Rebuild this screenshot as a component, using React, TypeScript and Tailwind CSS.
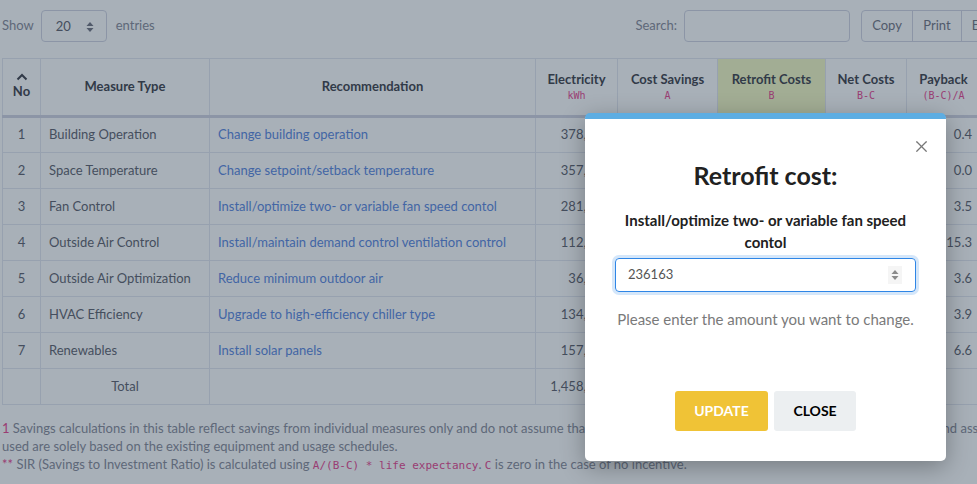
import { X } from 'lucide-react'

interface Row {
  no: number
  type: string
  rec: string
  kwh: string
  savings: string
  retrofit: string
  net: string
  payback: string
  sir: string
}

const rows: Row[] = [
  { no: 1, type: 'Building Operation', rec: 'Change building operation', kwh: '378,920', savings: '$41,682', retrofit: '$18,945', net: '$18,945', payback: '0.4', sir: '31.2' },
  { no: 2, type: 'Space Temperature', rec: 'Change setpoint/setback temperature', kwh: '357,114', savings: '$39,282', retrofit: '$0', net: '$0', payback: '0.0', sir: '-' },
  { no: 3, type: 'Fan Control', rec: 'Install/optimize two- or variable fan speed contol', kwh: '281,077', savings: '$30,918', retrofit: '$236,163', net: '$108,216', payback: '3.5', sir: '4.3' },
  { no: 4, type: 'Outside Air Control', rec: 'Install/maintain demand control ventilation control', kwh: '112,530', savings: '$12,378', retrofit: '$189,402', net: '$189,402', payback: '15.3', sir: '1.0' },
  { no: 5, type: 'Outside Air Optimization', rec: 'Reduce minimum outdoor air', kwh: '36,245', savings: '$3,987', retrofit: '$14,352', net: '$14,352', payback: '3.6', sir: '4.2' },
  { no: 6, type: 'HVAC Efficiency', rec: 'Upgrade to high-efficiency chiller type', kwh: '134,861', savings: '$14,835', retrofit: '$57,855', net: '$57,855', payback: '3.9', sir: '5.1' },
  { no: 7, type: 'Renewables', rec: 'Install solar panels', kwh: '157,402', savings: '$17,314', retrofit: '$114,272', net: '$114,272', payback: '6.6', sir: '3.8' },
]

function SortArrows({ className }: { className?: string }) {
  return (
    <svg width="8" height="12" viewBox="0 0 8 12" className={className}>
      <path d="M4 1 L7.5 5 H0.5 Z" fill="currentColor" />
      <path d="M4 11 L7.5 7 H0.5 Z" fill="currentColor" />
    </svg>
  )
}

export default function App() {
  const th = 'border-r border-[#e3e6f0] px-2 pb-[2px] text-center align-middle font-bold text-[13px] leading-[18px] text-[#3a3b45]'
  const td = 'border-r border-t border-[#e3e6f0] px-2 h-[36px] align-middle'
  const unit = "font-['DejaVu_Sans_Mono',monospace] text-[10px] font-normal leading-[15px] text-[#e83e8c]"

  return (
    <div className="relative h-[484px] w-[977px] overflow-hidden bg-white font-['Lato','Segoe_UI',sans-serif] text-[13px] text-[#5a5c69]">
      <div className="w-[1100px]">
        {/* toolbar */}
        <div className="mb-[6px] flex h-[52px] items-center pl-[2px]">
          <span className="text-[#858796]">Show</span>
          <div className="ml-[7px] flex h-[32px] w-[66px] items-center justify-between rounded-[4px] border border-[#d1d3e2] pl-[14px] pr-[12px] pt-[2px]">
            <span className="text-[#5a5c69]">20</span>
            <SortArrows className="text-[#6e707e]" />
          </div>
          <span className="ml-[9px] text-[#858796]">entries</span>

          <span className="ml-auto text-[#858796]">Search:</span>
          <div className="ml-[7px] h-[32px] w-[166px] rounded-[4px] border border-[#d1d3e2]" />
          <div className="ml-[11px] flex h-[32px] rounded-[4px] border border-[#d1d3e2]">
            {['Copy', 'Print', 'Excel', 'CSV', 'PDF'].map((b, i) => (
              <div key={b} className={`flex items-center justify-center text-[#6e707e] ${i > 0 ? 'border-l border-[#d1d3e2]' : ''} ${i === 0 ? 'w-[50px]' : i === 1 ? 'w-[49px]' : i === 2 ? 'w-[50px]' : 'w-[44px]'}`}>
                {b}
              </div>
            ))}
          </div>
        </div>

        {/* table */}
        <table className="ml-[2px] w-[1098px] table-fixed border-collapse border border-[#e3e6f0]">
          <colgroup>
            <col className="w-[38px]" />
            <col className="w-[169px]" />
            <col className="w-[326px]" />
            <col className="w-[82px]" />
            <col className="w-[100px]" />
            <col className="w-[108px]" />
            <col className="w-[81px]" />
            <col className="w-[74px]" />
            <col />
          </colgroup>
          <thead>
            <tr className="h-[58px] border-b-[3px] border-[#d1d3e2]">
              <th className={th}>
                <div className="flex flex-col items-center">
                  <svg width="12" height="8" viewBox="0 0 12 8" className="mb-[1px]">
                    <path d="M1.5 6.5 L6 2 L10.5 6.5" fill="none" stroke="#3a3b45" strokeWidth="2" />
                  </svg>
                  <span>No</span>
                </div>
              </th>
              <th className={th}>Measure Type</th>
              <th className={th}>Recommendation</th>
              <th className={th}>
                Electricity
                <div className={unit}>kWh</div>
              </th>
              <th className={th}>
                Cost Savings
                <div className={unit}>A</div>
              </th>
              <th className={`${th} bg-[#f6fbc4]`}>
                Retrofit Costs
                <div className={unit}>B</div>
              </th>
              <th className={th}>
                Net Costs
                <div className={unit}>B-C</div>
              </th>
              <th className={th}>
                Payback
                <div className={unit}>(B-C)/A</div>
              </th>
              <th className={th}>
                SIR
                <div className={unit}>**</div>
              </th>
            </tr>
          </thead>
          <tbody>
            {rows.map((r) => (
              <tr key={r.no}>
                <td className={`${td} text-center`}>{r.no}</td>
                <td className={td}>{r.type}</td>
                <td className={`${td} text-[#5583e0]`}>{r.rec}</td>
                <td className={`${td} text-right`}>{r.kwh}</td>
                <td className={`${td} text-right`}>{r.savings}</td>
                <td className={`${td} text-right`}>{r.retrofit}</td>
                <td className={`${td} text-right`}>{r.net}</td>
                <td className={`${td} text-right`}>{r.payback}</td>
                <td className={`${td} text-right`}>{r.sir}</td>
              </tr>
            ))}
            <tr>
              <td className={td} />
              <td className={`${td} text-center`}>Total</td>
              <td className={td} />
              <td className={`${td} text-right`}>1,458,149</td>
              <td className={`${td} text-right`}>$160,396</td>
              <td className={`${td} text-right`}>$630,989</td>
              <td className={`${td} text-right`}>$503,042</td>
              <td className={td} />
              <td className={td} />
            </tr>
          </tbody>
        </table>

        {/* footnotes */}
        <div className="mt-[14px] w-[1060px] pl-[2px] leading-[18px] text-[#858796]">
          <p>
            <span className="text-[#e83e8c]">1</span> Savings calculations in this table reflect savings from individual measures only and do not assume that
            all measures are implemented at the same time. Utility rates and assumptions used are solely based on the existing equipment and usage schedules.
          </p>
          <p>
            <span className="text-[#e83e8c]">**</span> SIR (Savings to Investment Ratio) is calculated using{' '}
            <code className="font-['DejaVu_Sans_Mono',monospace] text-[11px] text-[#e83e8c]">A/(B-C) * life expectancy</code>.{' '}
            <code className="font-['DejaVu_Sans_Mono',monospace] text-[11px] text-[#e83e8c]">C</code> is zero in the case of no incentive.
          </p>
        </div>
      </div>

      {/* backdrop */}
      <div className="absolute inset-0 bg-[rgba(37,57,78,0.4)]" />

      {/* modal */}
      <div className="absolute left-[585px] top-[113px] flex h-[348px] w-[361px] flex-col items-center rounded-[5px] border-t-[6px] border-[#5dade2] bg-white px-[30px] shadow-[0_6px_24px_rgba(0,0,0,0.3)]">
        <button className="absolute right-[15px] top-[18px] text-[#777]">
          <X size={19} strokeWidth={1.5} />
        </button>
        <h2 className="mt-[41px] text-[25px] font-bold leading-[30px] text-[#212121]">Retrofit cost:</h2>
        <p className="mt-[19px] text-center text-[15px] font-bold leading-[22px] text-[#212121]">
          Install/optimize two- or variable fan speed contol
        </p>
        <div className="mt-[5px] flex h-[34px] w-[301px] items-center justify-between rounded-[4px] border border-[#2f86e6] pl-[12px] pr-[13px] ring-[3px] ring-[#2f86e6]/20">
          <span className="text-[13px] text-[#555]">236163</span>
          <div className="flex h-[18px] w-[14px] items-center justify-center bg-[#f5f5f5]">
            <SortArrows className="text-[#8a8a8a]" />
          </div>
        </div>
        <p className="mt-[16px] text-[15px] text-[#7a7a7a]">Please enter the amount you want to change.</p>
        <div className="mt-[60px] flex gap-[6px]">
          <button className="h-[40px] w-[93px] rounded-[3px] bg-[#f0c336] text-[14px] font-bold text-white">UPDATE</button>
          <button className="h-[40px] w-[82px] rounded-[3px] bg-[#eceff1] text-[14px] font-bold text-black">CLOSE</button>
        </div>
      </div>
    </div>
  )
}
